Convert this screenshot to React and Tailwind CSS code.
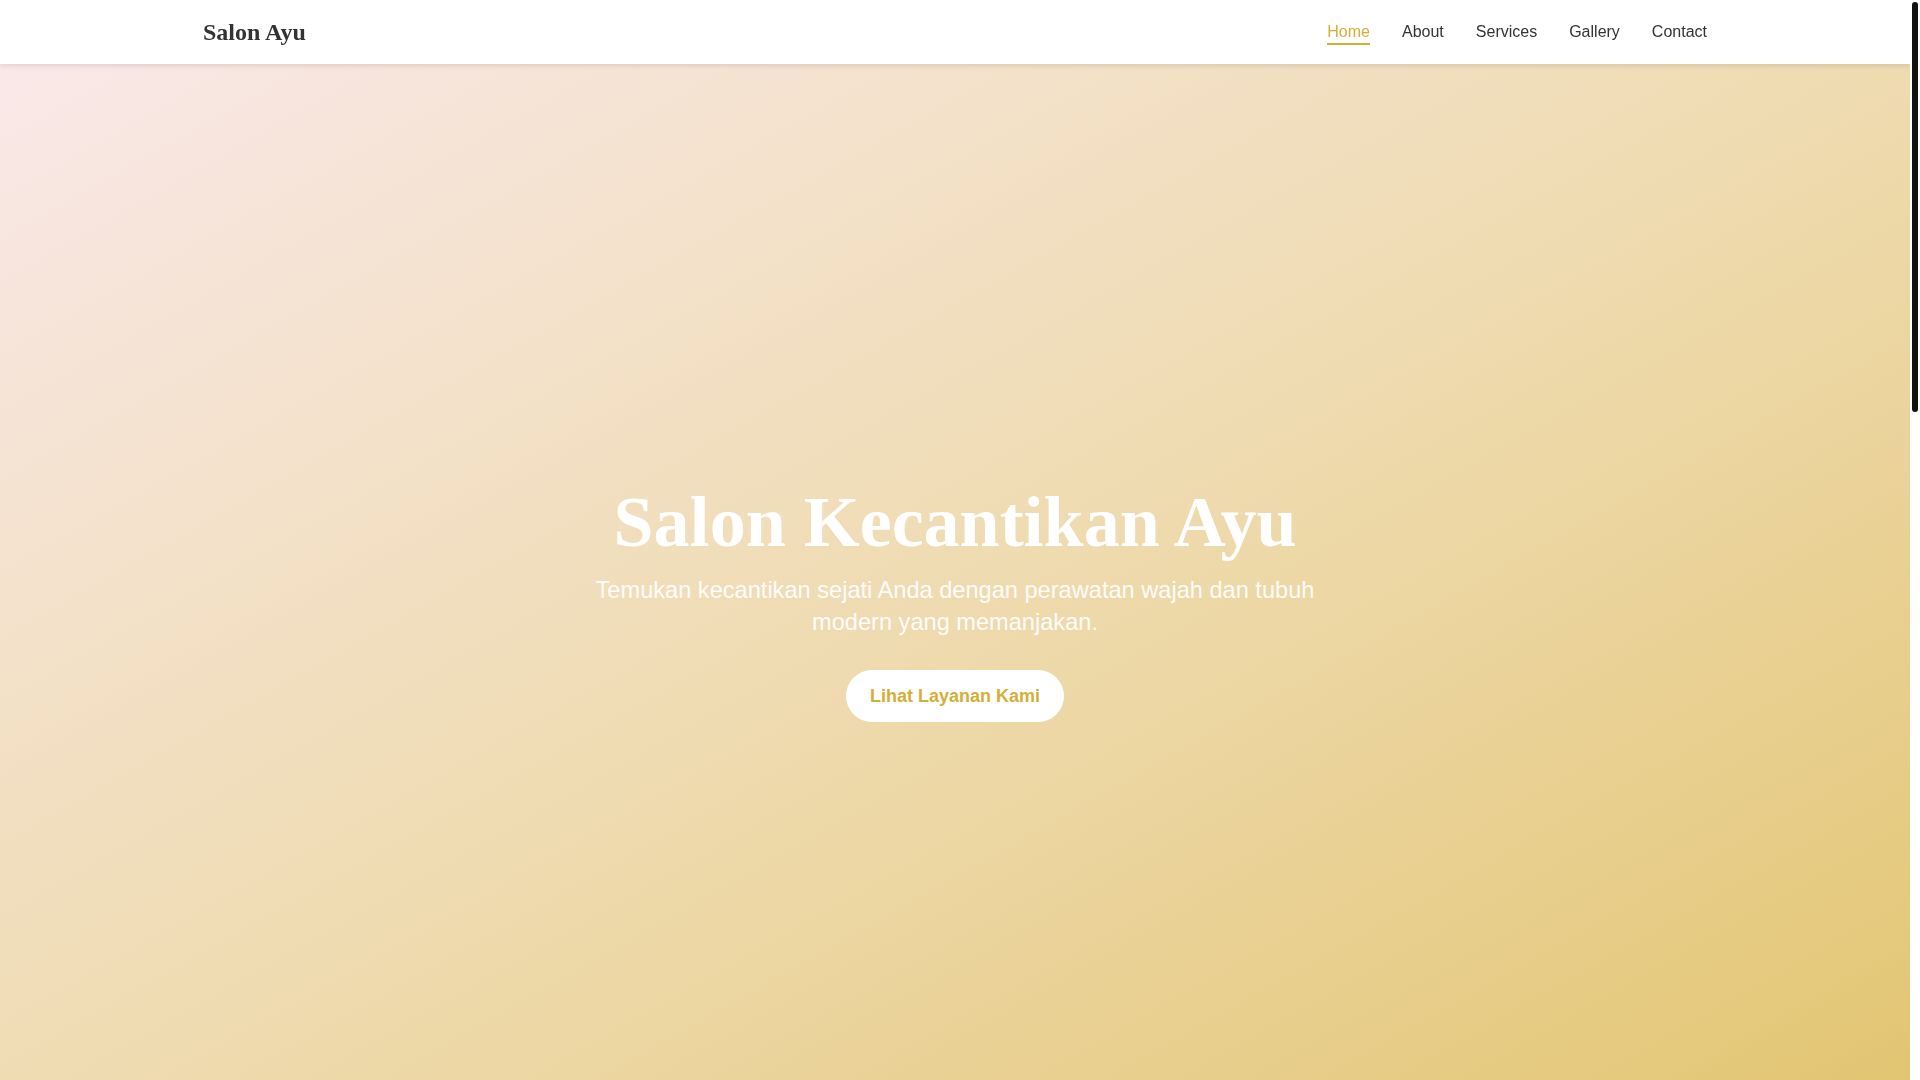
import React, { useEffect, useRef, useState } from 'react';

const navLinks = ['Home', 'About', 'Services', 'Gallery', 'Contact'];

const services = [
  { name: 'Facial Treatment', desc: 'Perawatan wajah untuk kulit bersih, lembap dan bercahaya.' },
  { name: 'Body Spa', desc: 'Relaksasi tubuh dengan lulur dan pijat aromaterapi.' },
  { name: 'Hair Styling', desc: 'Potong, creambath dan styling rambut sesuai gaya Anda.' },
];

function Header() {
  return (
    <header className="sticky top-0 z-50 bg-white shadow-[0_2px_5px_rgba(0,0,0,0.1)]">
      <div className="container mx-auto px-4 h-16 flex items-center justify-between">
        <a href="#home" className="text-2xl font-bold text-[#333] font-['Liberation_Serif',serif]">
          Salon Ayu
        </a>
        <nav className="flex items-center gap-8">
          {navLinks.map((link, i) => (
            <a
              key={link}
              href={'#' + link.toLowerCase()}
              className={
                i === 0
                  ? 'relative text-base text-[#d4af37]'
                  : 'relative text-base text-[#333] hover:text-[#d4af37]'
              }
            >
              {link}
              {i === 0 && <span className="absolute left-0 -bottom-px h-0.5 w-full bg-[#d4af37]"></span>}
            </a>
          ))}
        </nav>
      </div>
    </header>
  );
}

function Hero() {
  return (
    <section
      id="home"
      className="min-h-screen flex items-center justify-center bg-gradient-to-br from-[#f9e8e8] via-[#efdbb0] to-[#e2c46e] px-4"
    >
      <div className="max-w-3xl text-center">
        <h1 className="text-7xl font-bold text-white mb-4 font-['Liberation_Serif',serif]">
          Salon Kecantikan Ayu
        </h1>
        <p className="text-[23.6px] leading-8 text-white/95 mb-8">
          Temukan kecantikan sejati Anda dengan perawatan wajah dan tubuh modern yang memanjakan.
        </p>
        <a
          href="#services"
          className="inline-block rounded-full bg-white px-6 py-3 text-lg font-bold text-[#d4af37] hover:bg-[#fdf8ec]"
        >
          Lihat Layanan Kami
        </a>
      </div>
    </section>
  );
}

export default function App() {
  const scrollRef = useRef(null);
  const [thumb, setThumb] = useState({ top: 2, height: 408 });

  const updateThumb = () => {
    const el = scrollRef.current;
    if (!el) return;
    const track = el.clientHeight - 4;
    const height = Math.max(30, (el.clientHeight / el.scrollHeight) * track);
    const maxScroll = el.scrollHeight - el.clientHeight;
    const top = 2 + (maxScroll > 0 ? (el.scrollTop / maxScroll) * (track - height) : 0);
    setThumb({ top, height });
  };

  useEffect(() => {
    updateThumb();
  }, []);

  return (
    <div className="flex h-screen bg-white text-[#333] font-['Liberation_Sans',Arial,sans-serif]">
      <div
        ref={scrollRef}
        onScroll={updateThumb}
        className="flex-1 overflow-y-auto [scrollbar-width:none]"
      >
        <Header />
        <Hero />

        <section id="about" className="h-[420px] py-20">
          <div className="container mx-auto px-4 text-center">
            <h2 className="text-4xl font-bold mb-6 font-['Liberation_Serif',serif]">Tentang Kami</h2>
            <p className="max-w-2xl mx-auto text-lg text-gray-600">
              Salon Ayu menghadirkan perawatan kecantikan profesional dengan suasana nyaman dan
              produk berkualitas untuk setiap pelanggan.
            </p>
          </div>
        </section>

        <section id="services" className="h-[520px] py-20 bg-[#fbf7ee]">
          <div className="container mx-auto px-4">
            <h2 className="text-4xl font-bold mb-10 text-center font-['Liberation_Serif',serif]">Layanan Kami</h2>
            <div className="grid grid-cols-3 gap-8">
              {services.map((s) => (
                <div key={s.name} className="rounded-lg bg-white p-8 shadow">
                  <h3 className="text-xl font-bold text-[#d4af37] mb-3">{s.name}</h3>
                  <p className="text-gray-600">{s.desc}</p>
                </div>
              ))}
            </div>
          </div>
        </section>

        <section id="gallery" className="h-[480px] py-20">
          <div className="container mx-auto px-4">
            <h2 className="text-4xl font-bold mb-10 text-center font-['Liberation_Serif',serif]">Gallery</h2>
            <div className="grid grid-cols-4 gap-4">
              <div className="h-48 rounded-lg bg-[#f3e4c4]"></div>
              <div className="h-48 rounded-lg bg-[#f6e8e8]"></div>
              <div className="h-48 rounded-lg bg-[#efd9a8]"></div>
              <div className="h-48 rounded-lg bg-[#f3e4c4]"></div>
            </div>
          </div>
        </section>

        <footer id="contact" className="h-[267px] py-16 bg-[#333] text-white text-center">
          <h2 className="text-3xl font-bold mb-4 font-['Liberation_Serif',serif]">Contact</h2>
          <p className="text-gray-300">Jl. Melati No. 12, Jakarta · (021) 555-1234</p>
          <p className="mt-6 text-sm text-gray-400">© 2024 Salon Ayu. All rights reserved.</p>
        </footer>
      </div>

      {/* scrollbar rail */}
      <div className="relative w-[10px] shrink-0 bg-white">
        <div
          className="absolute left-[2px] right-[2px] rounded-full bg-[#111]"
          style={{ top: thumb.top, height: thumb.height }}
        ></div>
      </div>
    </div>
  );
}
